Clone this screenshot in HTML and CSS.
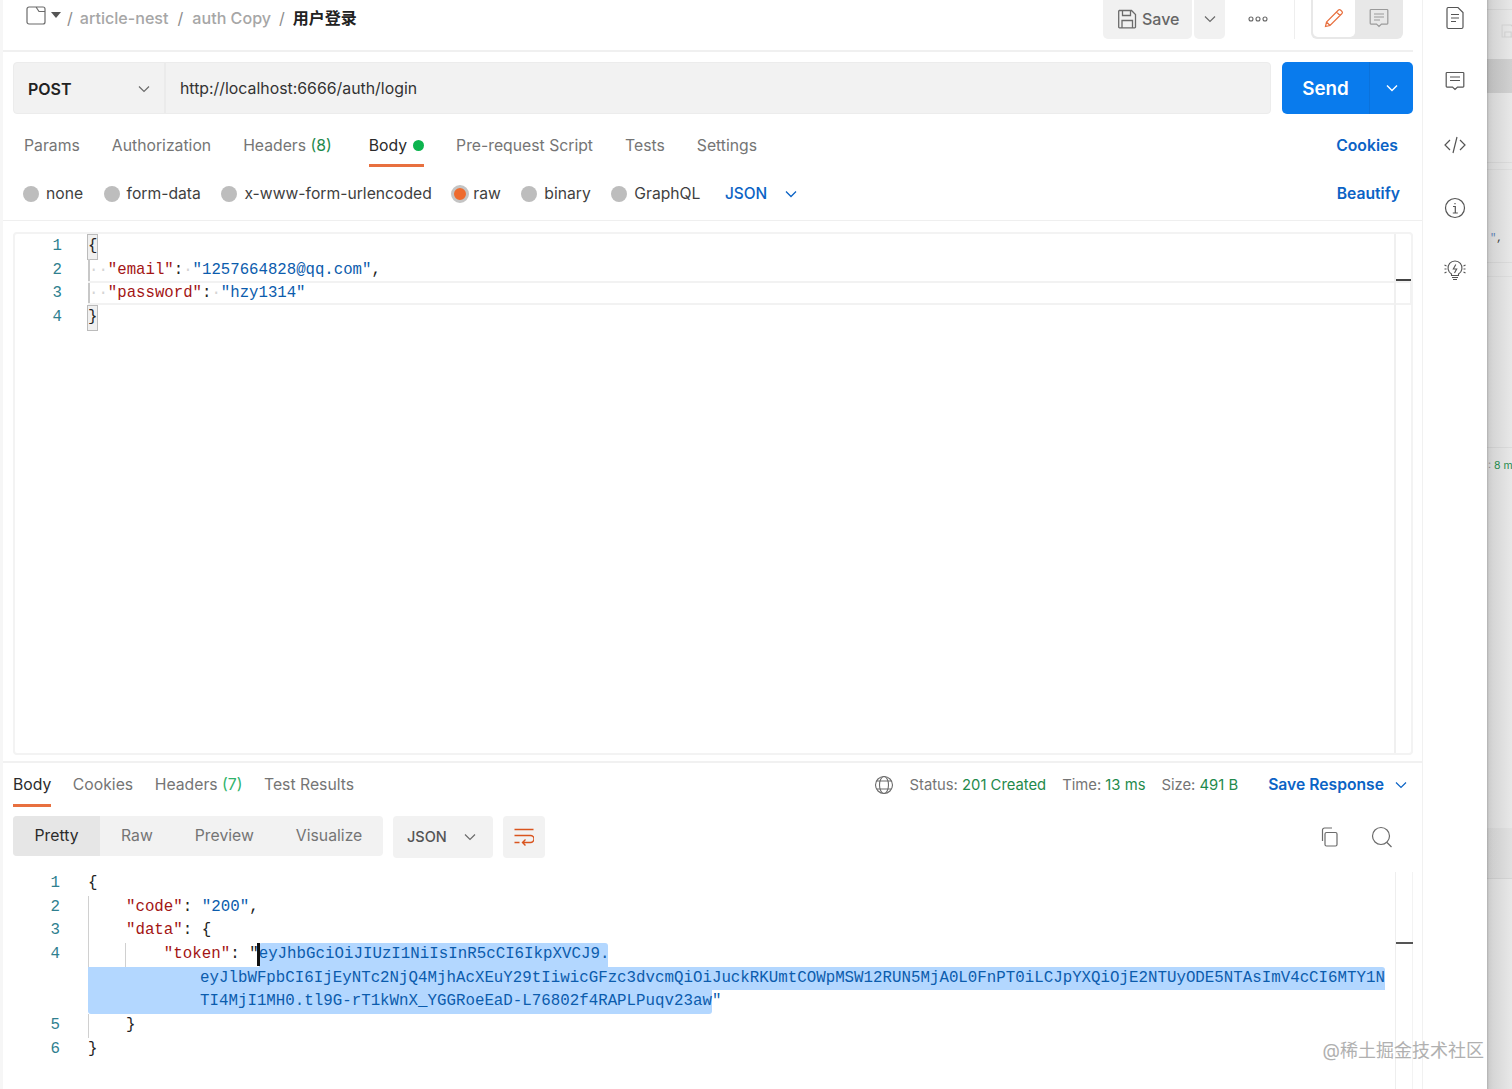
FILE: index.html
```html
<!DOCTYPE html>
<html lang="en">
<head>
<meta charset="utf-8">
<title>用户登录</title>
<link rel="stylesheet" href="styles.css">
</head>
<body>
<div class="app">
  <main class="main">
    <header class="top">
      <svg class="i-req" width="20" height="20" viewBox="0 0 20 20"><path d="M3 1h14a2 2 0 0 1 2 2v13a2 2 0 0 1-2 2H3a2 2 0 0 1-2-2V3a2 2 0 0 1 2-2zM10 1l3 4.500h6" fill="none" stroke="#6b6b6b" stroke-width="1.200"/></svg>
      <span class="caret"></span>
      <nav class="crumbs"><span class="sl">/</span><span>article-nest</span><span class="sl">/</span><span>auth Copy</span><span class="sl">/</span><b>用户登录</b></nav>
      <div class="top-right">
        <div class="btn-save">
          <svg width="20" height="20" viewBox="0 0 20 20" fill="none" stroke="#6b6b6b" stroke-width="1.300"><path d="M2 1.500h12.500l4 4V18a.8.8 0 0 1-.8.8H2.500a.8.8 0 0 1-.8-.8V2.300a.8.8 0 0 1 .8-.8zM5.500 1.500v5h8v-5M5 18.500v-7h10.500v7"/></svg>
          <span>Save</span>
        </div>
        <div class="btn-save-more"><svg width="12" height="8" viewBox="0 0 12 8"><path d="M1 1.500l5 5 5-5" fill="none" stroke="#6b6b6b" stroke-width="1.200"/></svg></div>
        <svg class="dots" width="20" height="6" viewBox="0 0 20 6" fill="none" stroke="#666" stroke-width="1.100"><circle cx="3" cy="3" r="2"/><circle cx="10" cy="3" r="2"/><circle cx="17" cy="3" r="2"/></svg>
        <span class="vsep"></span>
        <div class="mode">
          <span class="mode-on"><svg width="20" height="20" viewBox="0 0 20 20" fill="none" stroke="#e8703f" stroke-width="1.200"><path d="M1.500 18.500l1-4.500L14.500 2a1.500 1.500 0 0 1 2 0l1.500 1.500a1.500 1.500 0 0 1 0 2L6 17.500zM2.500 14L6 17.500M12.500 4l3.500 3.500"/></svg></span>
          <span class="mode-off"><svg width="20" height="20" viewBox="0 0 20 20" fill="none" stroke="#9a9a9a" stroke-width="1.200"><path d="M2 1.500h16a.8.8 0 0 1 .8.8v13a.8.8 0 0 1-.8.8h-5.500L10 18.500l-2.500-2.400H2a.8.8 0 0 1-.8-.8v-13a.8.8 0 0 1 .8-.8zM5 6h10M5 9h10M5 12h6"/></svg></span>
        </div>
      </div>
    </header>

    <section class="url-row">
      <div class="url-box">
        <div class="method"><b>POST</b><svg width="12" height="8" viewBox="0 0 12 8"><path d="M1 1.500l5 5 5-5" fill="none" stroke="#6b6b6b" stroke-width="1.200"/></svg></div>
        <div class="url">http://localhost:6666/auth/login</div>
      </div>
      <div class="send"><span class="send-l">Send</span><span class="send-r"><svg width="12" height="8" viewBox="0 0 12 8"><path d="M1 1.500l5 5 5-5" fill="none" stroke="#fff" stroke-width="1.400"/></svg></span></div>
    </section>

    <section class="tabs">
      <span class="tab">Params</span>
      <span class="tab">Authorization</span>
      <span class="tab tab-hd">Headers <em>(8)</em></span>
      <span class="tab tab-on">Body<i class="dot"></i></span>
      <span class="tab">Pre-request Script</span>
      <span class="tab">Tests</span>
      <span class="tab">Settings</span>
      <a class="link link-end">Cookies</a>
    </section>

    <section class="opts">
      <span class="opt"><i class="radio"></i>none</span>
      <span class="opt"><i class="radio"></i>form-data</span>
      <span class="opt"><i class="radio"></i>x-www-form-urlencoded</span>
      <span class="opt"><i class="radio radio-on"></i>raw</span>
      <span class="opt"><i class="radio"></i>binary</span>
      <span class="opt"><i class="radio"></i>GraphQL</span>
      <span class="lang">JSON<svg width="12" height="8" viewBox="0 0 12 8"><path d="M1 1.500l5 5 5-5" fill="none" stroke="#0b63c5" stroke-width="1.300"/></svg></span>
      <a class="link link-end">Beautify</a>
    </section>

    <section class="editor">
      <div class="ed-code">
        <div class="ln"><span class="no">1</span><span class="code"><span class="match">{</span></span></div>
        <div class="ln"><span class="no">2</span><span class="code rail"><span class="ws">··</span><span class="k">"email"</span>:<span class="ws">·</span><span class="s">"1257664828@qq.com"</span>,</span></div>
        <div class="ln"><span class="no">3</span><span class="code rail active"><span class="ws">··</span><span class="k">"password"</span>:<span class="ws">·</span><span class="s">"hzy1314"</span></span></div>
        <div class="ln"><span class="no">4</span><span class="code"><span class="match">}</span></span></div>
      </div>
      <div class="minimap"><span class="mark"></span></div>
    </section>

    <div class="rule"></div>

    <section class="res-tabs">
      <span class="rtab rtab-on">Body</span>
      <span class="rtab">Cookies</span>
      <span class="rtab">Headers <em class="em2">(7)</em></span>
      <span class="rtab">Test Results</span>
      <div class="res-meta">
        <svg width="20" height="20" viewBox="0 0 20 20" fill="none" stroke="#6b6b6b" stroke-width="1.100"><circle cx="10" cy="10" r="8.500"/><ellipse cx="10" cy="10" rx="4.500" ry="8.500"/><path d="M2.500 6h15M2.500 14h15"/></svg>
        <span class="m">Status: <em>201 Created</em></span>
        <span class="m">Time: <em>13 ms</em></span>
        <span class="m">Size: <em>491 B</em></span>
        <a class="link save-res">Save Response<svg width="12" height="8" viewBox="0 0 12 8"><path d="M1 1.500l5 5 5-5" fill="none" stroke="#0b63c5" stroke-width="1.200"/></svg></a>
      </div>
    </section>

    <section class="res-bar">
      <div class="seg"><span class="seg-on">Pretty</span><span class="s-raw">Raw</span><span class="s-pre">Preview</span><span class="s-vis">Visualize</span></div>
      <div class="fmt">JSON<svg width="12" height="8" viewBox="0 0 12 8"><path d="M1 1.500l5 5 5-5" fill="none" stroke="#6b6b6b" stroke-width="1.200"/></svg></div>
      <div class="wrap"><svg width="20" height="18" viewBox="0 0 20 18" fill="none" stroke="#d9541e" stroke-width="1.400"><path d="M.5 1.500h19M.5 7.500h16a3 3 0 0 1 0 7H9M11.500 11.500L8.500 14.500l3 3M.5 14.500h5"/></svg></div>
      <div class="res-tools">
        <svg width="20" height="20" viewBox="0 0 20 20" fill="none" stroke="#6b6b6b" stroke-width="1.200"><rect x="6" y="5.500" width="12" height="13.500" rx="1.500"/><path d="M3.500 14V3a2 2 0 0 1 2-2H13"/></svg>
        <svg width="22" height="22" viewBox="0 0 22 22" fill="none" stroke="#6b6b6b" stroke-width="1.200"><circle cx="10" cy="10" r="8.500"/><path d="M16 16.500l4.500 4.500"/></svg>
      </div>
    </section>

    <section class="res-code">
      <div class="rl"><span class="rno">1</span><span class="rc">{</span></div>
      <div class="rl"><span class="rno">2</span><span class="rc g1">    <span class="k">"code"</span>: <span class="s">"200"</span>,</span></div>
      <div class="rl"><span class="rno">3</span><span class="rc g1">    <span class="k">"data"</span>: {</span></div>
      <div class="rl"><span class="rno">4</span><span class="rc g2">        <span class="k">"token"</span>: "<span class="sel s"><i class="cursor"></i>eyJhbGciOiJIUzI1NiIsInR5cCI6IkpXVCJ9.</span></span></div>
      <div class="rl"><span class="rno"></span><span class="rc"><span class="sel-row sel-long s">eyJlbWFpbCI6IjEyNTc2NjQ4MjhAcXEuY29tIiwicGFzc3dvcmQiOiJuckRKUmtCOWpMSW12RUN5MjA0L0FnPT0iLCJpYXQiOjE2NTUyODE5NTAsImV4cCI6MTY1N</span></span></div>
      <div class="rl"><span class="rno"></span><span class="rc"><span class="sel-row sel-short s">TI4MjI1MH0.tl9G-rT1kWnX_YGGRoeEaD-L76802f4RAPLPuqv23aw</span><span class="s">"</span></span></div>
      <div class="rl"><span class="rno">5</span><span class="rc g1">    }</span></div>
      <div class="rl"><span class="rno">6</span><span class="rc">}</span></div>
      <div class="res-mini"><span class="mark2"></span></div>
    </section>
    <div class="wm">@稀土掘金技术社区</div>
  </main>

  <aside class="side">
    <svg width="20" height="24" viewBox="0 0 20 24" fill="none" stroke="#555" stroke-width="1.200"><path d="M3 1.500h10l5 5V21a1.500 1.500 0 0 1-1.500 1.500h-13A1.500 1.500 0 0 1 2 21V3a1.500 1.500 0 0 1 1-1.500zM6 8.500h8M6 12h8M6 15.500h5"/></svg>
    <svg width="20" height="20" viewBox="0 0 20 20" fill="none" stroke="#555" stroke-width="1.200"><path d="M2 1.500h16a.8.8 0 0 1 .8.8v13a.8.8 0 0 1-.8.8h-5.500L10 18.500l-2.500-2.400H2a.8.8 0 0 1-.8-.8v-13a.8.8 0 0 1 .8-.8zM5 6h10M5 9.500h10"/></svg>
    <svg width="22" height="18" viewBox="0 0 22 18" fill="none" stroke="#555" stroke-width="1.200"><path d="M6 4l-5 5 5 5M16 4l5 5-5 5M13 1L9 17"/></svg>
    <svg width="22" height="22" viewBox="0 0 22 22" fill="none" stroke="#555" stroke-width="1.200"><circle cx="11" cy="11" r="9.500"/><path d="M9 9.500h2.300V16M8.800 16h5M11 6v1.200"/></svg>
    <svg width="22" height="24" viewBox="0 0 22 24" fill="none" stroke="#555" stroke-width="1.100"><path d="M7.500 16.500v-1.500a7 7 0 1 1 7 0v1.500zM8 18.500h6M9 20.500h4M11.800 5.500L9.300 10h3.400l-2.200 4M.5 6l2 1M.5 14l2-1M21.500 6l-2 1M21.500 14l-2-1M.5 10h2M19.500 10h2"/></svg>
  </aside>

  <div class="behind">
    <svg class="b-save" width="14" height="14" viewBox="0 0 20 20" fill="none" stroke="#cfcfcf" stroke-width="1.500"><path d="M2 1.500h12.500l4 4V18.500H1.500v-17zM5.500 18.500v-7h9v7"/></svg>
    <span class="b-text b-quote"><span class="b-q">"</span>,</span>
    <span class="b-text b-time">: <em>8 m</em></span>
  </div>
</div>
</body>
</html>
```
FILE: styles.css
```css
* { box-sizing: border-box; }
html, body { margin: 0; height: 100%; overflow: hidden; background: #fff; }
body { font-family: Inter, "Noto Sans CJK SC", "Liberation Sans", sans-serif; color: #6b6b6b; font-size: 15.750px; }
em { font-style: normal; color: #1f8a4c; }
a { text-decoration: none; }
svg { display: block; flex: none; }

.app { display: flex; width: 1512px; height: 1089px; }
.main { position: relative; width: 1423px; height: 1089px; border-left: 3px solid #f6f6f6; border-right: 1px solid #f1f1f1; padding-right: 9px; flex: none; }

/* header */
.top { display: flex; align-items: center; height: 52px; padding: 0 0 14px 23px; border-bottom: 2px solid #f0f0f0; }
.i-req { margin-top: -4px; }
.caret { width: 0; height: 0; margin-left: 5px; margin-top: -6px; border: 5px solid transparent; border-top: 6px solid #555; border-bottom: 0; }
.crumbs { display: flex; align-items: center; font-size: 16.100px; color: #a6a6a6; margin-left: 6px; font-weight: 500; }
.crumbs .sl { font-weight: 400; margin: 0 9px; color: #8c8c8c; }
.crumbs .sl:first-child { margin: 0 7px 0 0; }
.crumbs .sl:nth-child(5) { margin: 0 8px; }
.crumbs b { color: #222; font-weight: 600; font-size: 16px; padding-bottom: 2px; }
.top-right { display: flex; align-items: center; align-self: flex-start; margin-left: auto; height: 41px; margin-top: -2px; }
.btn-save { display: flex; align-items: center; gap: 5px; width: 89px; height: 41px; padding-left: 14px; background: #f1f1f1; border-radius: 0 0 5px 5px; font-weight: 500; font-size: 16px; color: #666; }
.btn-save-more { display: flex; align-items: center; justify-content: center; width: 31px; height: 41px; margin-left: 2px; background: #f1f1f1; border-radius: 0 0 5px 5px; }
.dots { margin-left: 23px; }
.vsep { width: 1px; height: 41px; background: #eee; margin-left: 26px; }
.mode { display: flex; width: 92px; height: 41px; margin-left: 16px; margin-right: 10px; background: #e8e8e8; border-radius: 0 0 6px 6px; padding-bottom: 2px; }
.mode span { display: flex; align-items: center; justify-content: center; }
.mode-on { width: 42px; margin-left: 2px; background: #fff; border-radius: 0 0 5px 5px; }
.mode-off { flex: 1; }

/* URL row */
.url-row { display: flex; gap: 11px; padding: 10px 0 0 10px; height: 62px; }
.url-box { flex: 1; display: flex; height: 52px; background: #f2f2f2; border: 1px solid #ececec; border-radius: 4px; }
.method { display: flex; align-items: center; justify-content: space-between; width: 152px; padding: 2px 14px 0 14px; border-right: 2px solid #ebebeb; color: #222; }
.method b { font-weight: 600; font-size: 16px; }
.url { display: flex; align-items: center; padding-left: 14px; color: #333; font-size: 15.850px; }
.send { display: flex; width: 131px; height: 52px; background: #097bed; border-radius: 5px; color: #fff; }
.send-l { display: flex; align-items: center; justify-content: center; width: 87px; font-size: 18.800px; font-weight: 600; }
.send-r { display: flex; align-items: center; justify-content: center; flex: 1; border-left: 1px solid #0a72dc; }

/* tabs */
.tabs { display: flex; align-items: flex-start; padding: 22px 15px 0 21px; height: 55px; }
.tab { position: relative; margin-right: 32px; line-height: 20px; color: #757575; white-space: nowrap; }
.tab-hd { margin-right: 37px; }
.tab-on { color: #2b2b2b; }
.tab-on::after { content: ""; position: absolute; left: 0; right: 0; top: 28px; height: 3px; background: #e8703f; }
.dot { display: inline-block; width: 11px; height: 11px; border-radius: 50%; background: #0cb44e; margin-left: 6px; vertical-align: 0; }
.link { color: #0b63c5; font-weight: 600; white-space: nowrap; }
.link-end { margin-left: auto; }

/* body options */
.opts { display: flex; align-items: center; height: 52px; padding: 5px 22px 7px 20px; border-bottom: 1px solid #efefef; margin-right: -9px; font-size: 15.700px; }
.opt { display: flex; align-items: center; gap: 7px; color: #3f3f3f; margin-right: 20.500px; white-space: nowrap; }
.radio { width: 16px; height: 16px; border-radius: 50%; background: #bdbdbd; flex: none; }
.radio-on { width: 18px; height: 18px; margin: 0 -3px 0 -1px; background: #ee6b2f; border: 3px solid #c4c4c4; }
.lang { display: flex; align-items: center; gap: 18px; color: #0b63c5; font-weight: 500; font-size: 15.400px; margin-left: 4px; }

/* editor */
.editor { display: flex; height: 523px; margin: 11px 0 0 10px; border: 2px solid #f3f3f3; border-radius: 4px; font: 15.700px/23.700px "Liberation Mono", monospace; color: #222; }
.ed-code { flex: 1; padding-top: 1px; }
.ln { display: flex; height: 23.700px; }
.no { width: 47px; text-align: right; color: #2f7f8f; flex: none; }
.code { flex: 1; margin-left: 26px; white-space: pre; position: relative; }
.rail { box-shadow: inset 2px 0 0 #c8c8c8; padding-left: 1px; }
.active::after { content: ""; position: absolute; left: 0; right: -18px; top: -1px; bottom: 1px; border: 2px solid #f2f2f2; border-left: 0; }
.match { display: inline-block; width: 9px; background: #f0f0f0; outline: 1px solid #bbb; }
.k { color: #a31515; }
.s { color: #0b5cad; }
.ws { color: #d4d4d4; }
.minimap { position: relative; width: 17px; border-left: 2px solid #f0f0f0; }
.mark { position: absolute; left: 0; right: 0; top: 45px; height: 2px; background: #444; }

.rule { height: 2px; margin: 6px -9px 0 0; background: #f1f1f1; }

/* response tabs */
.res-tabs { display: flex; align-items: flex-start; height: 53px; padding: 12px 6px 0 10px; }
.rtab { position: relative; line-height: 20px; margin-right: 21.500px; color: #757575; white-space: nowrap; }
.rtab-on { color: #2b2b2b; }
.rtab-on::after { content: ""; position: absolute; left: 0; right: 0; top: 29px; height: 3px; background: #e8703f; }
.em2 { color: #2fb36b; }
.res-meta { display: flex; align-items: center; margin-left: auto; font-size: 14.800px; line-height: 20px; }
.m { margin-left: 16px; color: #757575; white-space: nowrap; }
.save-res { display: flex; align-items: center; gap: 11px; margin-left: 30px; font-size: 15.700px; }

/* response bar */
.res-bar { display: flex; align-items: flex-start; height: 56px; padding: 0 0 0 10px; }
.seg { display: flex; align-items: center; width: 370px; height: 40px; padding-bottom: 2px; background: #f2f2f2; border-radius: 4px; color: #757575; }
.seg-on { display: flex; align-items: center; justify-content: center; width: 87px; height: 40px; margin-bottom: -2px; padding-bottom: 2px; background: #e6e6e6; border-radius: 4px 0 0 4px; color: #2b2b2b; }
.s-raw { margin-left: 21px; }
.s-pre { margin-left: 42px; }
.s-vis { margin-left: 42px; }
.fmt { display: flex; align-items: center; gap: 17px; width: 100px; height: 42px; margin-left: 10px; padding: 0 0 1px 14px; background: #f2f2f2; border-radius: 4px; color: #555; font-weight: 500; font-size: 14.500px; }
.wrap { display: flex; align-items: center; justify-content: center; width: 42px; height: 42px; margin-left: 10px; background: #f2f2f2; border-radius: 4px; }
.res-tools { display: flex; align-items: center; gap: 32px; height: 42px; margin-left: auto; padding-right: 20px; }

/* response code */
.res-code { position: relative; font: 15.800px/23.700px "Liberation Mono", monospace; color: #222; }
.rl { display: flex; height: 23.700px; white-space: pre; }
.rno { width: 57px; text-align: right; color: #2f7f8f; flex: none; }
.rc { margin-left: 28px; position: relative; }
.g1::before, .g2::before { content: ""; position: absolute; left: 0; top: 0; bottom: 0; width: 1px; background: #d0d0d0; }
.g2::after { content: ""; position: absolute; left: 37px; top: 0; bottom: 0; width: 1px; background: #d0d0d0; }
.sel { position: relative; display: inline-block; width: 349px; background: #b3d7ff; border-radius: 3px 3px 0 0; height: 23.700px; }
.cursor { position: absolute; left: -2px; top: 0; width: 3px; height: 23px; background: #111; }
.sel-row { display: inline-block; background: #b3d7ff; height: 23.700px; padding-left: 112px; }
.sel-long { width: 1297px; border-radius: 0 3px 0 0; overflow: hidden; }
.sel-short { border-radius: 0 0 3px 3px; }
.res-mini { position: absolute; left: 1392px; top: 0; width: 18px; height: 219px; border-left: 1px solid #eee; border-right: 1px solid #f3f3f3; }
.mark2 { position: absolute; left: 0; width: 17px; top: 70px; height: 2px; background: #555; }
.wm { position: absolute; right: -62px; bottom: 27px; font-size: 18px; color: #a8a8a8; opacity: .9; z-index: 3; white-space: nowrap; }

/* sidebar */
.side { display: flex; flex-direction: column; align-items: center; width: 64px; height: 1089px; flex: none; padding-top: 6px; }
.side svg:nth-child(2) { margin-top: 41px; }
.side svg:nth-child(3) { margin-top: 45px; }
.side svg:nth-child(4) { margin-top: 43px; }
.side svg:nth-child(5) { margin-top: 40px; }

/* window behind */
.behind { position: relative; flex: 1; height: 1089px; overflow: hidden;
  background:
    linear-gradient(180deg, rgba(0,0,0,0) 0, rgba(0,0,0,0) 9px, rgba(0,0,0,.05) 9px, rgba(0,0,0,.05) 10px, rgba(0,0,0,0) 10px, rgba(0,0,0,0) 59px, rgba(0,0,0,.1) 59px, rgba(0,0,0,.1) 93px, rgba(0,0,0,0) 93px, rgba(0,0,0,0) 162px, rgba(0,0,0,.05) 162px, rgba(0,0,0,.05) 163px, rgba(0,0,0,0) 163px, rgba(0,0,0,0) 169px, rgba(0,0,0,.04) 169px, rgba(0,0,0,.04) 170px, rgba(0,0,0,0) 170px, rgba(0,0,0,0) 262px, rgba(0,0,0,.05) 262px, rgba(0,0,0,.05) 263px, rgba(0,0,0,0) 263px, rgba(0,0,0,0) 276px, rgba(0,0,0,.04) 276px, rgba(0,0,0,.04) 277px, rgba(0,0,0,0) 277px, rgba(0,0,0,0) 447px, rgba(0,0,0,.05) 447px, rgba(0,0,0,.05) 448px, rgba(0,0,0,0) 448px, rgba(0,0,0,0) 828px, rgba(0,0,0,.03) 828px, rgba(0,0,0,.03) 878px, rgba(0,0,0,.08) 878px, rgba(0,0,0,.08) 879px, rgba(0,0,0,0) 879px),
    linear-gradient(90deg, #b0b0b0 0, #cdcdcd 2px, #d6d6d6 6px, #e8e8e8 100%); }
.b-save { position: absolute; left: 14px; top: 24px; }
.b-text { position: absolute; font-size: 10.500px; color: #888; white-space: nowrap; }
.b-quote { top: 232px; left: 3px; color: #333; font-family: "Liberation Mono", monospace; }
.b-q { color: #5b7db1; }
.b-time { top: 459px; left: 1px; }
```
